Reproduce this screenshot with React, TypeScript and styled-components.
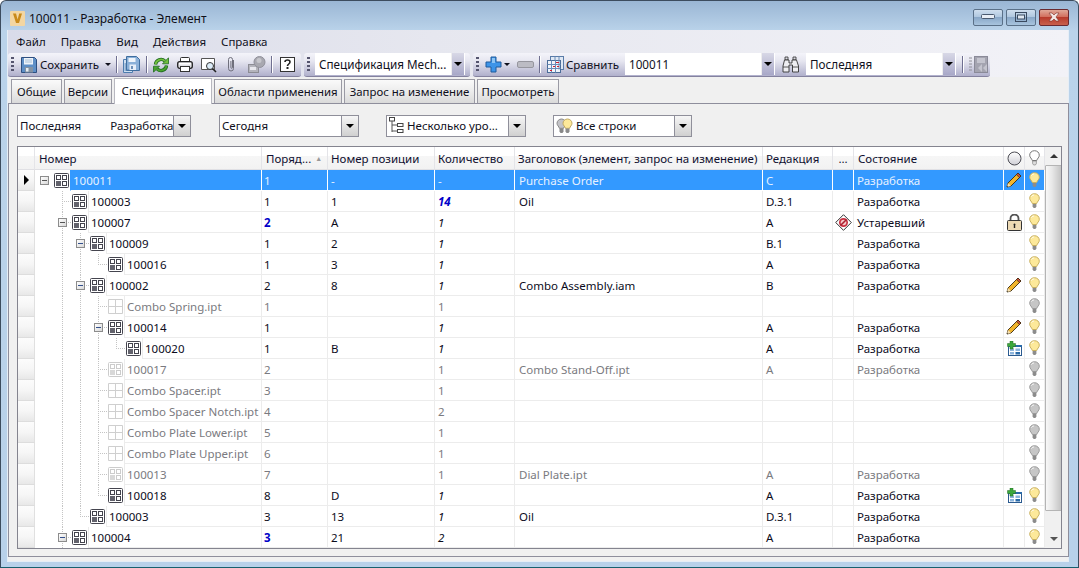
import React from "react";
import styled, { createGlobalStyle, css } from "styled-components";

const Global = createGlobalStyle`
  html, body { margin: 0; padding: 0; background: #fff; overflow: hidden; }
  body { font-family: "Noto Sans", "Open Sans", sans-serif; font-size: 11.5px; color: #10101c; }
`;

const COLS = "17px 227px 66px 107px 80px 248px 70px 21px 150px 21px 20px";

const Window = styled.div`
  width: 1079px; height: 568px; box-sizing: border-box;
  display: flex; flex-direction: column;
  background: linear-gradient(180deg, #9ab6d4 0, #bad3ea 30px, #b8d1ea 100%);
  border: 1px solid #3c4c5e; border-bottom-color: #17606e; border-radius: 6px 6px 0 0;
  overflow: hidden;
`;
const TitleBar = styled.div`
  height: 29px; flex: none; display: flex; align-items: center; padding: 5px 9px 0; box-sizing: border-box;
`;
const TitleText = styled.div`font-size: 12px; margin-left: 4px; flex: 1; color: #101018; white-space: nowrap;`;
const WinButtons = styled.div`display: flex; gap: 3px; margin-right: 0; margin-top: -2px;`;
const WinButton = styled.div<{ $close?: boolean }>`
  width: 30px; height: 17px; box-sizing: border-box; border: 1px solid ${p => (p.$close ? "#6a2a30" : "#5a7088")};
  border-radius: 2px; display: flex; align-items: center; justify-content: center;
  background: ${p => p.$close
    ? "linear-gradient(180deg,#e0a898 0,#d2705e 45%,#b83c2c 50%,#c8604c 100%)"
    : "linear-gradient(180deg,#cfdeee 0,#b0c8e0 45%,#8aa8c8 50%,#a8c4de 100%)"};
`;
const Body = styled.div`
  flex: 1; margin: 0 9px 5px 6px; border: 1px solid #e6eef6; border-top: 0;
  background: #f0f0f0; display: flex; flex-direction: column; min-height: 0;
`;
const Band = styled.div`background: linear-gradient(90deg, #d9dbe9 0, #e6e7ef 40%, #f2f2f7 100%);`;
const MenuBar = styled(Band)`height: 23px; display: flex; align-items: center; padding-left: 8px; gap: 15px; font-size: 11.5px;`;
const ToolBand = styled(Band)`height: 24px; display: flex; gap: 3px;`;
const Toolbar = styled.div<{ $w: number }>`
  width: ${p => p.$w}px; height: 24px; box-sizing: border-box; flex: none;
  display: flex; align-items: center; padding-left: 3px;
  background: linear-gradient(180deg, #f4f4fa 0, #e6e6f0 35%, #b0b0cc 100%);
  border-bottom: 1px solid #84829f; border-radius: 3px;
`;
const Grip = styled.div`
  width: 3px; height: 16px; flex: none;
  background: repeating-linear-gradient(180deg, #55556e 0 2px, transparent 2px 4px);
`;
const Slot = styled.div<{ $ml?: number; $w?: number }>`
  margin-left: ${p => p.$ml ?? 0}px; flex: none; display: flex; align-items: center; white-space: nowrap;
  ${p => p.$w && css`width: ${p.$w}px;`}
  font-size: 11.5px;
`;
const Sep = styled.div<{ $ml: number }>`width: 1px; height: 17px; flex: none; margin-left: ${p => p.$ml}px; background: #6f6f90; box-shadow: 1px 0 #fff;`;
const Caret = styled.div<{ $ml: number }>`
  flex: none; margin-left: ${p => p.$ml}px; width: 0; height: 0;
  border-left: 3px solid transparent; border-right: 3px solid transparent; border-top: 3px solid #10101c;
`;
const ToolCombo = styled.div<{ $w: number; $ml: number }>`
  width: ${p => p.$w}px; margin-left: ${p => p.$ml}px; height: 22px; margin-top: -1px; background: #fff; flex: none;
  display: flex; align-items: center; font-size: 11.7px; box-sizing: border-box; padding-left: 4px;
`;
const ComboLabel = styled.div`flex: 1; white-space: nowrap; overflow: hidden;`;
const ToolComboBtn = styled.div`
  width: 14px; height: 22px; box-sizing: border-box; display: flex; align-items: center; justify-content: center;
  background: linear-gradient(180deg, #d8d8e6 0, #a8a8c8 100%); border-right: 1px solid #fff; border-left: 1px solid #eee;
`;
const Arrow = styled.div`
  width: 0; height: 0; border-left: 4px solid transparent; border-right: 4px solid transparent; border-top: 4px solid #000;
`;
const TabStrip = styled.div`display: flex; height: 26px; flex: none; align-items: flex-end; padding-left: 3px; gap: 2px;`;
const Tab = styled.div<{ $active?: boolean; $w: number }>`
  width: ${p => p.$w}px; box-sizing: border-box; flex: none; display: flex; align-items: center; justify-content: center;
  white-space: nowrap; font-size: 11.4px;
  height: ${p => (p.$active ? 26 : 24)}px;
  border: 1px solid #9a9aa4; border-bottom: 0;
  background: ${p => (p.$active ? "#fff" : "linear-gradient(180deg,#fafafa 0,#ececec 50%,#dadada 100%)")};
  ${p => p.$active && css`margin-bottom: -1px; z-index: 1; border-color: #b8b8c0; padding-bottom: 2px;`}
`;
const Panel = styled.div`
  flex: 1; min-height: 0; width: 1061px; box-sizing: border-box;
  border: 1px solid #8e8e9c; padding: 11px 6px 8px 8px; display: flex; flex-direction: column;
  margin-bottom: 4px;
`;
const Filters = styled.div`display: flex; height: 22px; flex: none;`;
const Combo = styled.div<{ $w: number; $ml: number }>`
  width: ${p => p.$w}px; margin-left: ${p => p.$ml}px; flex: none; height: 22px; box-sizing: border-box;
  border: 1px solid #8f8f9a; background: #fff; display: flex; align-items: center; font-size: 11.5px;
`;
const ComboText = styled.div`flex: 1; display: flex; align-items: center; padding: 0 0 1px 2px; white-space: nowrap; gap: 3px; overflow: hidden;`;
const ComboBtn = styled.div`
  width: 17px; height: 20px; flex: none; box-sizing: border-box; border-left: 1px solid #8f8f9a;
  display: flex; align-items: center; justify-content: center;
  background: linear-gradient(180deg, #f6f6f6 0, #d0d0d0 100%);
`;
const GridBox = styled.div`
  margin-top: 9px; height: 403px; width: 1045px; flex: none; box-sizing: border-box;
  border: 1px solid #84848f; background: #fff; display: flex; overflow: hidden;
`;
const GridMain = styled.div`width: 1027px; flex: none; display: flex; flex-direction: column;`;
const HeaderRow = styled.div`
  display: grid; grid-template-columns: ${COLS}; height: 23px; flex: none;
`;
const HeadCell = styled.div<{ $pl?: number; $center?: boolean }>`
  display: flex; align-items: center; box-sizing: border-box; white-space: nowrap; overflow: hidden;
  padding-left: ${p => p.$pl ?? 3}px; font-size: 11.5px; color: #101030;
  ${p => p.$center && css`justify-content: center; padding-left: 0;`}
  background: linear-gradient(180deg, #fff 0, #fff 40%, #f6f6f6 42%, #f2f2f2 100%);
  border-right: 1px solid #e4e4e8; border-bottom: 1px solid #e0e0e4;
`;
const SortMark = styled.span`margin-left: 4px; font-size: 7px; color: #999;`;
const Row = styled.div`display: grid; grid-template-columns: ${COLS}; height: 21px; flex: none;`;
const RowHead = styled.div`
  display: flex; align-items: center; justify-content: center;
  background: linear-gradient(180deg, #fcfcfc 0, #f6f6f6 50%, #e8e8e8 100%);
  border-right: 1px solid #e0e0e0; border-bottom: 1px solid #ddd; box-sizing: border-box;
`;
const RowArrow = styled.div`width: 0; height: 0; border-top: 5px solid transparent; border-bottom: 5px solid transparent; border-left: 5px solid #000;`;
type CellProps = { $sel?: boolean; $grey?: boolean; $pl?: number; $center?: boolean };
const cellText = css<CellProps>`
  color: ${p => (p.$sel ? "#e6f1ff" : p.$grey ? "#7a7a80" : "#0c0c1c")};
  background: ${p => (p.$sel ? "#3399ff" : "#fff")};
`;
const Cell = styled.div<CellProps>`
  ${cellText}
  display: flex; align-items: center; box-sizing: border-box; white-space: nowrap; overflow: hidden;
  padding-left: ${p => p.$pl ?? 3}px; font-size: 11.5px;
  ${p => p.$center && css`justify-content: center; padding-left: 0;`}
  border-right: 1px solid ${p => (p.$sel ? "#fff" : "#ececec")};
  border-bottom: 1px solid ${p => (p.$sel ? "#fff" : "#ececec")};
`;
const TreeCell = styled.div`display: flex; align-items: stretch; background: #fff; min-width: 0;`;
const Guide = styled.div<{ $kind: string }>`
  width: 18px; flex: none; display: flex; align-items: center; justify-content: center; height: 21px;
  ${p => {
    const v = "repeating-linear-gradient(180deg,#c4c4c4 0 1px,transparent 1px 2px)";
    const h = "repeating-linear-gradient(90deg,#c4c4c4 0 1px,transparent 1px 2px)";
    if (p.$kind === "pass") return `background: ${v} 9px 0/1px 21px no-repeat;`;
    if (p.$kind === "tee") return `background: ${v} 9px 0/1px 21px no-repeat, ${h} 9px 10px/9px 1px no-repeat;`;
    if (p.$kind === "last") return `background: ${v} 9px 0/1px 11px no-repeat, ${h} 9px 10px/9px 1px no-repeat;`;
    return "";
  }}
`;
const Expander = styled.div<{ $root?: boolean }>`
  width: 9px; height: 9px; box-sizing: border-box; border: 1px solid #8c8c8c;
  background: linear-gradient(135deg, #fff 0, #d8d8d8 100%);
  display: flex; align-items: center; justify-content: center;
  &::after { content: ""; width: 5px; height: 1px; background: ${p => (p.$root ? "#555" : "#33508c")}; }
`;
const IconBox = styled.div`width: 17px; flex: none; display: flex; align-items: center; padding-left: 1px; box-sizing: border-box;`;
const Name = styled(Cell)`flex: 1; min-width: 0; padding-left: 2px; border-left: 1px solid ${p => (p.$sel ? "#3399ff" : "#ececec")};`;
const Qty = styled.span<{ $k?: string }>`
  ${p => p.$k === "i" && "font-style: italic;"}
  ${p => p.$k === "b" && "font-style: italic; font-weight: 700; color: #0000c8;"}
`;
const Order = styled.span<{ $blue?: boolean }>`${p => p.$blue && "font-weight: 700; color: #0000c8;"}`;
const Scroll = styled.div`width: 17px; flex: none; display: flex; flex-direction: column; background: #f0f0f0;`;
const ScrollBtn = styled.div`height: 18px; flex: none; display: flex; align-items: center; justify-content: center; background: #f1f1f1;`;
const ScrollUp = styled.div`width: 0; height: 0; border-left: 4px solid transparent; border-right: 4px solid transparent; border-bottom: 4px solid #333;`;
const ScrollDown = styled.div`width: 0; height: 0; border-left: 4px solid transparent; border-right: 4px solid transparent; border-top: 4px solid #555;`;
const Thumb = styled.div`
  height: 346px; flex: none; box-sizing: border-box; border: 1px solid #b4b4b4; border-radius: 1px;
  background: linear-gradient(90deg, #f8f8f8 0, #e8e8e8 40%, #c4c4c4 100%);
`;
const Track = styled.div`flex: 1;`;

/* ---------- drawings ---------- */
const Sv = styled.svg`display: block; flex: none;`;
const Logo = () => (
  <Sv width="15" height="15" viewBox="0 0 15 15">
    <rect width="15" height="15" rx="1" fill="#f3d6a2" />
    <path d="M3 2.5h3l1.6 6 1.6-6H12L9 12H6z" fill="#c98a1a" />
  </Sv>
);
const ItemIcon = ({ grey }: { grey?: boolean }) => {
  const c = grey ? "#cccccc" : "#44444e";
  const f = grey ? "#d8d8d8" : "#62626c";
  return (
    <Sv width="15" height="15" viewBox="0 0 15 15">
      <rect x=".5" y=".5" width="14" height="14" rx="1" fill="#fff" stroke={c} />
      <rect x="2.500" y="2.500" width="4" height="4" fill="none" stroke={c} />
      <rect x="8.500" y="2.500" width="4" height="4" fill="none" stroke={c} />
      <rect x="2" y="8" width="5" height="5" fill={f} />
      <rect x="8.500" y="8.500" width="4" height="4" fill="none" stroke={c} />
    </Sv>
  );
};
const PlainIcon = () => (
  <Sv width="15" height="15" viewBox="0 0 15 15">
    <path d="M.5.5h14v14H.5zM7.500.5v14M.5 7.500h14" fill="#fff" stroke="#cfcfcf" />
  </Sv>
);
const Bulb = ({ kind }: { kind: "y" | "g" | "o" }) => {
  const fill = kind === "y" ? "#fde99a" : kind === "g" ? "#c6c6c6" : "#fff";
  const st = kind === "y" ? "#c8b060" : kind === "g" ? "#9a9a9a" : "#777";
  return (
    <Sv width="11" height="16" viewBox="0 0 11 16">
      <path d="M5.500.7C2.700.7.700 2.700.700 5.200c0 2.300 2 3.200 2.600 5.300h4.400c.6-2.100 2.600-3 2.600-5.300C10.300 2.700 8.300.7 5.500.7z" fill={fill} stroke={st} />
      <path d="M3.600 11h3.800v2.500l-1 1.500H4.600l-1-1.500z" fill={kind === "o" ? "#ddd" : "#8c8c8c"} stroke={kind === "o" ? "#777" : "none"} strokeWidth=".6" />
      {kind !== "o" && <path d="M2.500 3.500C3 2.500 4 2 5 2" stroke="#fff" fill="none" />}
    </Sv>
  );
};
const Pencil = () => (
  <Sv width="16" height="16" viewBox="0 0 16 16">
    <path d="M12 1l3 3L5 14l-4 1 1-4z" fill="#f2b52c" stroke="#3a2a10" strokeWidth=".9" />
    <path d="M12 1l3 3-1.600 1.600-3-3z" fill="#c8503c" stroke="#3a2a10" strokeWidth=".7" />
    <path d="M2 11l3 3-4 1z" fill="#f6e0b0" />
    <path d="M1 15l1.200-.3-.9-.9z" fill="#222" />
  </Sv>
);
const Lock = () => (
  <Sv width="15" height="17" viewBox="0 0 15 17">
    <path d="M3.500 7V4.500a4 4 0 0 1 8 0V7" fill="none" stroke="#555" strokeWidth="1.800" />
    <rect x=".5" y="6.500" width="14" height="10" rx="1" fill="#ecd9b4" stroke="#333" />
    <path d="M7.500 9.500a1 1 0 0 1 .7 1.700V14H6.800v-2.800a1 1 0 0 1 .7-1.700z" fill="#222" />
  </Sv>
);
const Obsolete = () => (
  <Sv width="17" height="17" viewBox="0 0 17 17">
    <path d="M8.500.7l7.800 7.800-7.800 7.800L.7 8.500z" fill="#fff" stroke="#333" />
    <circle cx="8.500" cy="8.500" r="4.500" fill="#c83040" />
    <circle cx="8.500" cy="8.500" r="2.800" fill="#f4c8c8" />
    <path d="M5.500 11.500l6-6" stroke="#a82030" strokeWidth="1.600" />
  </Sv>
);
const PlusGrid = () => (
  <Sv width="15" height="15" viewBox="0 0 15 15">
    <rect x="1.500" y="4.500" width="13" height="10" fill="#fff" stroke="#2a5a90" />
    <path d="M1 4h14v2H1z" fill="#2a6aa8" />
    <rect x="3" y="7.500" width="4" height="2.500" fill="#8cb4dc" />
    <rect x="8.500" y="7.500" width="4.500" height="2.500" fill="#8cb4dc" />
    <rect x="3" y="11" width="4" height="2.500" fill="#8cb4dc" />
    <rect x="8.500" y="11" width="4.500" height="2.500" fill="#2a6aa8" />
    <path d="M3 0h3v2.500h2.500v3H6V8H3V5.500H.5v-3H3z" fill="#3ca83c" stroke="#206820" strokeWidth=".5" />
  </Sv>
);
const Circle = () => (
  <Sv width="15" height="15" viewBox="0 0 15 15">
    <defs>
      <linearGradient id="cg" x1="0" y1="0" x2="0" y2="1"><stop offset="0" stopColor="#fff" /><stop offset="1" stopColor="#cfcfd6" /></linearGradient>
    </defs>
    <circle cx="7.500" cy="7.500" r="6.500" fill="url(#cg)" stroke="#4c4c54" />
  </Sv>
);
const SaveIcon = () => (
  <Sv width="16" height="16" viewBox="0 0 16 16">
    <path d="M.5.5h13l2 2v13H.5z" fill="#5f8fc6" stroke="#2e4f80" />
    <rect x="3" y="1" width="9" height="6.500" fill="#eef3f9" />
    <path d="M4 3h7M4 5h7" stroke="#a8c0d8" />
    <rect x="4" y="10" width="8" height="5.500" fill="#8492a2" />
    <rect x="5" y="11" width="2.500" height="3.500" fill="#e6ecf2" />
  </Sv>
);
const CopiesIcon = () => (
  <Sv width="17" height="17" viewBox="0 0 17 17">
    <path d="M.5 3.500h9v13h-9z" fill="#cfe0f2" stroke="#4d7cae" />
    <path d="M3.500.5h10l3 3v11h-13z" fill="#8ab0d8" stroke="#3e6d9e" />
    <rect x="5.500" y="2" width="7" height="4" fill="#eef4fa" />
    <path d="M1.500 8h2M1.500 10h2M1.500 12h2M1.500 14h6" stroke="#4d7cae" />
    <rect x="6.500" y="8.500" width="6.500" height="5.500" fill="#e6eef8" />
    <rect x="8" y="10" width="2" height="3" fill="#6c90b8" />
  </Sv>
);
const RefreshIcon = () => (
  <Sv width="16" height="16" viewBox="0 0 16 16">
    <path d="M2.500 7.500A5.500 5.500 0 0 1 11.800 4" fill="none" stroke="#1f6a22" strokeWidth="3.400" />
    <path d="M2.500 7.500A5.500 5.500 0 0 1 11.800 4" fill="none" stroke="#72c03c" strokeWidth="1.800" />
    <path d="M9.500 6.800h6V.8z" fill="#72c03c" stroke="#1f6a22" strokeWidth=".8" />
    <path d="M13.500 8.500A5.500 5.500 0 0 1 4.200 12" fill="none" stroke="#1f6a22" strokeWidth="3.400" />
    <path d="M13.500 8.500A5.500 5.500 0 0 1 4.200 12" fill="none" stroke="#4aa42e" strokeWidth="1.800" />
    <path d="M6.500 9.200h-6v6z" fill="#4aa42e" stroke="#1f6a22" strokeWidth=".8" />
  </Sv>
);
const PrintIcon = () => (
  <Sv width="16" height="15" viewBox="0 0 16 15">
    <rect x="3.500" y=".5" width="9" height="5" rx="1" fill="#fff" stroke="#333" />
    <rect x=".7" y="4.700" width="14.600" height="6.600" rx="2" fill="#e0e0e4" stroke="#222" strokeWidth="1.300" />
    <rect x="2" y="6" width="12" height="1.500" fill="#fff" />
    <rect x="3.500" y="9.500" width="9" height="5" fill="#fff" stroke="#333" />
  </Sv>
);
const PreviewIcon = () => (
  <Sv width="16" height="16" viewBox="0 0 16 16">
    <path d="M.5 1.500h13v11H.5z" fill="#fff" stroke="#555" />
    <circle cx="9" cy="9" r="3.500" fill="#dcecf8" stroke="#333" />
    <path d="M11.500 11.500l3.500 3.500" stroke="#222" strokeWidth="1.600" />
  </Sv>
);
const ClipIcon = () => (
  <Sv width="10" height="17" viewBox="0 0 10 17">
    <path d="M7.500 4v8.500a2.500 2.500 0 0 1-5 0V3.500a2 2 0 0 1 4 0v8a.8.8 0 0 1-1.600 0V5" fill="none" stroke="#70707c" strokeWidth="1" />
  </Sv>
);
const DisabledDisk = () => (
  <Sv width="18" height="17" viewBox="0 0 18 17">
    <rect x=".5" y="8.500" width="10" height="8" fill="#b4b4bc" stroke="#8c8c94" />
    <rect x="2" y="11" width="6" height="3" fill="#e8e8ee" />
    <circle cx="11.500" cy="6" r="5.500" fill="#a8a8b0" stroke="#90909a" />
    <circle cx="11" cy="4.500" r="2.500" fill="#c6c6cc" />
  </Sv>
);
const HelpIcon = () => (
  <Sv width="15" height="15" viewBox="0 0 15 15">
    <rect x=".5" y=".5" width="14" height="14" fill="#fff" stroke="#333" />
    <path d="M5 5c0-1.500 1-2 2.500-2S10 3.700 10 5c0 2-2.500 2-2.500 4" fill="none" stroke="#222" strokeWidth="1.600" />
    <rect x="6.500" y="10" width="2" height="2" fill="#222" />
  </Sv>
);
const PlusIcon = () => (
  <Sv width="17" height="17" viewBox="0 0 17 17">
    <path d="M6 1h5v5h5v5h-5v5H6v-5H1V6h5z" fill="#3d94e8" stroke="#1e5a9c" />
    <path d="M7 2h3v5H7z" fill="#8cc4f4" />
  </Sv>
);
const MinusIcon = () => (
  <Sv width="17" height="7" viewBox="0 0 17 7">
    <rect x=".5" y=".5" width="16" height="6" rx="1.500" fill="#bcbcc4" stroke="#96969e" />
  </Sv>
);
const CompareIcon = () => (
  <Sv width="17" height="17" viewBox="0 0 17 17">
    <rect x="3.500" y=".5" width="13" height="13" fill="#dfe8f4" stroke="#5a7ca8" />
    <rect x=".5" y="4.500" width="13" height="12" fill="#f0f4fa" stroke="#4a6c98" />
    <path d="M4.500 4.500v12M8.500 4.500v12M.5 8.500h13M.5 12.500h13M8 .5v4M12 .5v13" stroke="#6a8cb8" />
    <path d="M6 10.500h2M10 10.500h2M9 6.500h3M3 14.500h2" stroke="#d02030" />
  </Sv>
);
const Binoculars = () => (
  <Sv width="17" height="17" viewBox="0 0 17 17">
    <path d="M3 1h3v3H3zM11 1h3v3h-3z" fill="#d8d8e0" stroke="#333" strokeWidth=".8" />
    <path d="M2.500 4h4.500v3h3V4h4.500l2 6v6h-6V9H7v7H1v-6z" fill="#eeeef2" stroke="#333" strokeWidth=".9" />
    <path d="M1 11h6M10 11h6" stroke="#333" strokeWidth=".8" />
  </Sv>
);
const LastIcon = () => (
  <Sv width="20" height="17" viewBox="0 0 20 17">
    <rect x="6.500" y=".5" width="13" height="16" fill="#a4a4b0" stroke="#8a8a98" />
    <rect x="9" y="2" width="8" height="5" fill="#c4c4ce" />
    <path d="M1 2h3M1 5h3M1 8h3M1 11h3M1 14h3" stroke="#909098" />
    <path d="M14 8l-4 4 4 4zM19 8l-4 4 4 4z" fill="#c4c4ce" />
  </Sv>
);
const HierIcon = () => (
  <Sv width="15" height="17" viewBox="0 0 15 17">
    <rect x=".5" y=".5" width="5" height="3.500" fill="#fff" stroke="#444" />
    <rect x="8.500" y="6.500" width="5.500" height="3" fill="#fff" stroke="#444" />
    <rect x="8.500" y="12.500" width="5.500" height="3" fill="#fff" stroke="#444" />
    <path d="M3 4v11M3 8h5.500M3 14h5.500" stroke="#555" fill="none" />
  </Sv>
);
const BulbPair = () => (
  <Sv width="17" height="16" viewBox="0 0 17 16">
    <path d="M5.500 1C3 1 1 3 1 5.300c0 2.200 2 3 2.400 5h4.200c.4-2 2.400-2.800 2.400-5C10 3 8 1 5.500 1z" fill="#c4c4c8" stroke="#888" />
    <path d="M3.500 10.500h4v3l-1 1.500h-2l-1-1.500z" fill="#888" />
    <path d="M11.500 1C9 1 7 3 7 5.300c0 2.200 2 3 2.400 5h4.200c.4-2 2.400-2.800 2.400-5C16 3 14 1 11.500 1z" fill="#fde99a" stroke="#c0a860" />
    <path d="M9.500 10.500h4v3l-1 1.500h-2l-1-1.500z" fill="#8c8c8c" />
  </Sv>
);

/* ---------- data ---------- */
type RowData = {
  lvl: number; name: string; exp?: boolean; icon?: "item" | "grey" | "plain"; grey?: boolean;
  order: string; blue?: boolean; pos?: string; qty: string; qk?: string; title?: string; rev?: string;
  stale?: boolean; state?: string; mark?: "pencil" | "lock" | "plus"; bulb?: "y" | "g";
};
const R = "Разработка";
const rows: RowData[] = [
  { lvl: 0, name: "100011", exp: true, order: "1", pos: "-", qty: "-", title: "Purchase Order", rev: "C", state: R, mark: "pencil" },
  { lvl: 1, name: "100003", order: "1", pos: "1", qty: "14", qk: "b", title: "Oil", rev: "D.3.1", state: R },
  { lvl: 1, name: "100007", exp: true, order: "2", blue: true, pos: "A", qty: "1", qk: "i", rev: "A", stale: true, state: "Устаревший", mark: "lock" },
  { lvl: 2, name: "100009", exp: true, order: "1", pos: "2", qty: "1", qk: "i", rev: "B.1", state: R },
  { lvl: 3, name: "100016", order: "1", pos: "3", qty: "1", qk: "i", rev: "A", state: R },
  { lvl: 2, name: "100002", exp: true, order: "2", pos: "8", qty: "1", qk: "i", title: "Combo Assembly.iam", rev: "B", state: R, mark: "pencil" },
  { lvl: 3, name: "Combo Spring.ipt", icon: "plain", grey: true, order: "1", qty: "1", bulb: "g" },
  { lvl: 3, name: "100014", exp: true, order: "1", qty: "1", qk: "i", rev: "A", state: R, mark: "pencil" },
  { lvl: 4, name: "100020", order: "1", pos: "B", qty: "1", qk: "i", rev: "A", state: R, mark: "plus" },
  { lvl: 3, name: "100017", icon: "grey", grey: true, order: "2", qty: "1", title: "Combo Stand-Off.ipt", rev: "A", state: R, bulb: "g" },
  { lvl: 3, name: "Combo Spacer.ipt", icon: "plain", grey: true, order: "3", qty: "1", bulb: "g" },
  { lvl: 3, name: "Combo Spacer Notch.ipt", icon: "plain", grey: true, order: "4", qty: "2", bulb: "g" },
  { lvl: 3, name: "Combo Plate Lower.ipt", icon: "plain", grey: true, order: "5", qty: "1", bulb: "g" },
  { lvl: 3, name: "Combo Plate Upper.ipt", icon: "plain", grey: true, order: "6", qty: "1", bulb: "g" },
  { lvl: 3, name: "100013", icon: "grey", grey: true, order: "7", qty: "1", title: "Dial Plate.ipt", rev: "A", state: R, bulb: "g" },
  { lvl: 3, name: "100018", order: "8", pos: "D", qty: "1", qk: "i", rev: "A", state: R, mark: "plus" },
  { lvl: 2, name: "100003", order: "3", pos: "13", qty: "1", qk: "i", title: "Oil", rev: "D.3.1", state: R },
  { lvl: 1, name: "100004", exp: true, order: "3", blue: true, pos: "21", qty: "2", qk: "i", rev: "A", state: R },
];

const hasLater = (i: number, d: number) => {
  for (let j = i + 1; j < rows.length; j++) {
    if (rows[j].lvl < d) return false;
    if (rows[j].lvl === d) return true;
  }
  return false;
};

const TreeGuides = ({ i }: { i: number }) => {
  const r = rows[i];
  const cols: React.ReactNode[] = [];
  for (let d = 0; d <= r.lvl; d++) {
    let kind = "";
    if (d > 0 && d < r.lvl) kind = hasLater(i, d) ? "pass" : "";
    if (d > 0 && d === r.lvl) kind = hasLater(i, d) ? "tee" : i === rows.length - 1 ? "tee" : "last";
    cols.push(
      <Guide key={d} $kind={kind}>
        {d === r.lvl && r.exp && <Expander $root={r.lvl === 0 || r.name === "100007"} />}
      </Guide>
    );
  }
  return <>{cols}</>;
};

const ToolComboBox = ({ w, ml, label }: { w: number; ml: number; label: string }) => (
  <ToolCombo $w={w} $ml={ml}>
    <ComboLabel>{label}</ComboLabel>
    <ToolComboBtn><Arrow /></ToolComboBtn>
  </ToolCombo>
);

export default function App() {
  return (
    <Window>
      <Global />
      <TitleBar>
        <Logo />
        <TitleText>100011 - Разработка - Элемент</TitleText>
        <WinButtons>
          <WinButton>
            <Sv width="14" height="6" viewBox="0 0 14 6"><rect x=".5" y=".5" width="13" height="4" rx="1" fill="#e8eef6" stroke="#4a5a70" /></Sv>
          </WinButton>
          <WinButton>
            <Sv width="12" height="10" viewBox="0 0 12 10"><rect x=".5" y=".5" width="11" height="9" fill="none" stroke="#3a4a60" /><rect x="2.500" y="3" width="7" height="4" fill="#dfe8f2" stroke="#3a4a60" /></Sv>
          </WinButton>
          <WinButton $close>
            <Sv width="14" height="10" viewBox="0 0 14 10"><path d="M2 1h3l2 2 2-2h3L9 5l3 4H9L7 7 5 9H2l3-4z" fill="#f4e8e4" stroke="#7a3028" strokeWidth=".6" /></Sv>
          </WinButton>
        </WinButtons>
      </TitleBar>
      <Body>
        <MenuBar>
          <span>Файл</span><span>Правка</span><span>Вид</span><span>Действия</span><span>Справка</span>
        </MenuBar>
        <ToolBand>
          <Toolbar $w={293}>
            <Grip />
            <Slot $ml={7}><SaveIcon /></Slot>
            <Slot $ml={3} $w={58}>Сохранить</Slot>
            <Caret $ml={7} />
            <Sep $ml={5} />
            <Slot $ml={6}><CopiesIcon /></Slot>
            <Sep $ml={6} />
            <Slot $ml={6}><RefreshIcon /></Slot>
            <Slot $ml={8}><PrintIcon /></Slot>
            <Slot $ml={8}><PreviewIcon /></Slot>
            <Slot $ml={9}><ClipIcon /></Slot>
            <Slot $ml={12}><DisabledDisk /></Slot>
            <Sep $ml={5} />
            <Slot $ml={8}><HelpIcon /></Slot>
          </Toolbar>
          <Toolbar $w={166}>
            <Grip />
            <ToolComboBox w={150} ml={5} label="Спецификация Mech..." />
          </Toolbar>
          <Toolbar $w={517}>
            <Grip />
            <Slot $ml={6}><PlusIcon /></Slot>
            <Caret $ml={2} />
            <Slot $ml={7}><MinusIcon /></Slot>
            <Sep $ml={5} />
            <Slot $ml={7}><CompareIcon /></Slot>
            <Slot $ml={2} $w={59}>Сравнить</Slot>
            <ToolComboBox w={150} ml={0} label="100011" />
            <Slot $ml={7}><Binoculars /></Slot>
            <ToolComboBox w={150} ml={7} label="Последняя" />
            <Sep $ml={6} />
            <Slot $ml={5}><LastIcon /></Slot>
          </Toolbar>
        </ToolBand>
        <TabStrip>
          <Tab $w={51}>Общие</Tab>
          <Tab $w={48}>Версии</Tab>
          <Tab $active $w={98}>Спецификация</Tab>
          <Tab $w={128}>Области применения</Tab>
          <Tab $w={131}>Запрос на изменение</Tab>
          <Tab $w={82}>Просмотреть</Tab>
        </TabStrip>
        <Panel>
          <Filters>
            <Combo $w={174} $ml={0}>
              <ComboText>Последняя<Slot $ml={26}>Разработка</Slot></ComboText>
              <ComboBtn><Arrow /></ComboBtn>
            </Combo>
            <Combo $w={140} $ml={28}>
              <ComboText>Сегодня</ComboText>
              <ComboBtn><Arrow /></ComboBtn>
            </Combo>
            <Combo $w={140} $ml={27}>
              <ComboText><HierIcon />Несколько уро...</ComboText>
              <ComboBtn><Arrow /></ComboBtn>
            </Combo>
            <Combo $w={139} $ml={27}>
              <ComboText><BulbPair />Все строки</ComboText>
              <ComboBtn><Arrow /></ComboBtn>
            </Combo>
          </Filters>
          <GridBox>
            <GridMain>
              <HeaderRow>
                <HeadCell />
                <HeadCell $pl={4}>Номер</HeadCell>
                <HeadCell $pl={4}>Поряд...<SortMark>▲</SortMark></HeadCell>
                <HeadCell>Номер позиции</HeadCell>
                <HeadCell>Количество</HeadCell>
                <HeadCell>Заголовок (элемент, запрос на изменение)</HeadCell>
                <HeadCell>Редакция</HeadCell>
                <HeadCell $center>...</HeadCell>
                <HeadCell $pl={4}>Состояние</HeadCell>
                <HeadCell $center><Circle /></HeadCell>
                <HeadCell $center><Bulb kind="o" /></HeadCell>
              </HeaderRow>
              {rows.map((r, i) => {
                const sel = i === 0;
                const g = r.grey;
                return (
                  <Row key={i}>
                    <RowHead>{sel && <RowArrow />}</RowHead>
                    <TreeCell>
                      <TreeGuides i={i} />
                      <IconBox>
                        {r.icon === "plain" ? <PlainIcon /> : <ItemIcon grey={r.icon === "grey"} />}
                      </IconBox>
                      <Name $sel={sel} $grey={g}>{r.name}</Name>
                    </TreeCell>
                    <Cell $sel={sel} $grey={g} $pl={2}><Order $blue={r.blue}>{r.order}</Order></Cell>
                    <Cell $sel={sel} $grey={g}>{r.pos}</Cell>
                    <Cell $sel={sel} $grey={g}><Qty $k={r.qk}>{r.qty}</Qty></Cell>
                    <Cell $sel={sel} $grey={g} $pl={4}>{r.title}</Cell>
                    <Cell $sel={sel} $grey={g}>{r.rev}</Cell>
                    <Cell $sel={sel} $center>{r.stale && <Obsolete />}</Cell>
                    <Cell $sel={sel} $grey={g}>{r.state}</Cell>
                    <Cell $sel={sel} $center>
                      {r.mark === "pencil" && <Pencil />}
                      {r.mark === "lock" && <Lock />}
                      {r.mark === "plus" && <PlusGrid />}
                    </Cell>
                    <Cell $sel={sel} $center><Bulb kind={r.bulb ?? "y"} /></Cell>
                  </Row>
                );
              })}
            </GridMain>
            <Scroll>
              <ScrollBtn><ScrollUp /></ScrollBtn>
              <Thumb />
              <Track />
              <ScrollBtn><ScrollDown /></ScrollBtn>
            </Scroll>
          </GridBox>
        </Panel>
      </Body>
    </Window>
  );
}
